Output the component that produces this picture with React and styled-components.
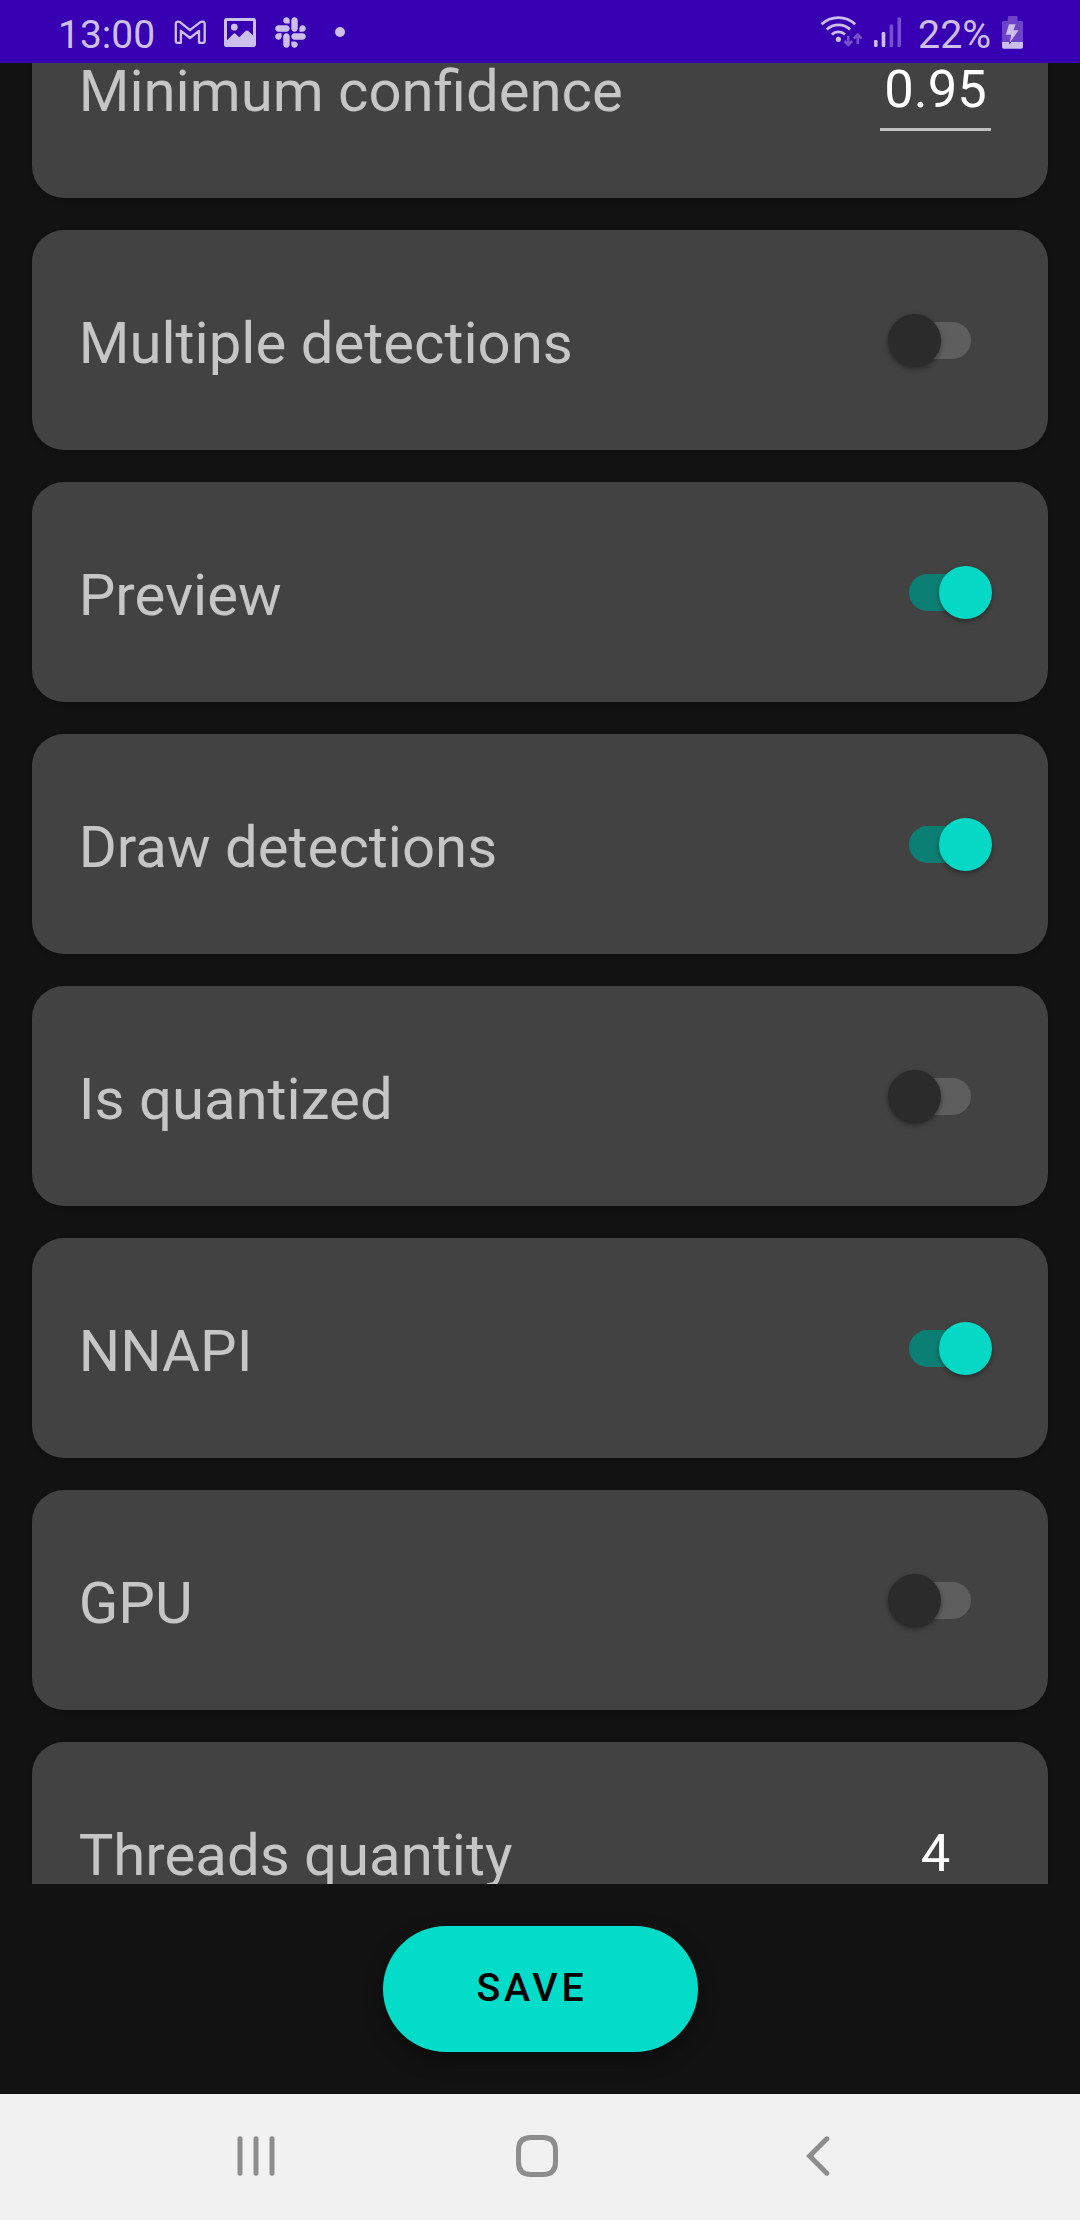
import React, { useState } from "react";
import styled, { createGlobalStyle } from "styled-components";
import { FaSlack } from "react-icons/fa";

const GlobalStyle = createGlobalStyle`
  * { box-sizing: border-box; }
  body { margin: 0; background: #121212; }
`;

const Screen = styled.div`
  width: 1080px;
  height: 2220px;
  display: flex;
  flex-direction: column;
  overflow: hidden;
  background: #121212;
  font-family: Roboto, "Liberation Sans", sans-serif;
`;

const StatusBar = styled.header`
  flex: none;
  height: 63px;
  padding: 0 57px 0 58px;
  display: flex;
  justify-content: space-between;
  background: #3700b3;
  color: #cdbfec;
`;

const StatusGroup = styled.div`
  display: flex;
  align-items: flex-start;
`;

const StatusText = styled.span`
  width: ${(p) => p.$width}px;
  margin-left: ${(p) => p.$before || 0}px;
  padding-top: 12px;
  font-size: ${(p) => p.$size}px;
  line-height: 46px;
  white-space: nowrap;
`;

const Glyph = styled.svg`
  display: block;
  flex: none;
  width: ${(p) => p.$w}px;
  height: ${(p) => p.$h}px;
  margin: ${(p) => p.$margin || "0"};
`;

const SlackMark = styled(FaSlack)`
  width: 31px;
  height: 35px;
  margin: 15px 0 0 19px;
`;

const MoreDot = styled.span`
  width: 10px;
  height: 10px;
  margin: 27px 0 0 29px;
  border-radius: 50%;
  background: currentColor;
`;

const SettingsList = styled.main`
  flex: none;
  height: 1821px;
  padding: 0 32px;
  display: flex;
  flex-direction: column;
  gap: 32px;
  overflow: hidden;
`;

const Card = styled.section`
  flex: none;
  height: 220px;
  padding: 0 56px 0 46.7px;
  display: flex;
  justify-content: space-between;
  align-items: center;
  border-radius: 32px;
  background: #424242;
  box-shadow: 0 2px 5px rgba(0, 0, 0, 0.22);
  &:first-child { margin-top: -85px; }
`;

const Label = styled.span`
  padding-top: 6px;
  font-size: 58.1px;
  line-height: 68px;
  color: #c6c6c6;
  white-space: nowrap;
`;

const ValueField = styled.span`
  width: 111px;
  height: 86px;
  margin: 0 1px 0 0;
  padding-top: 13px;
  border-bottom: 3px solid #c1c1c1;
  font-size: 52.5px;
  line-height: 62px;
  text-align: center;
  color: #fff;
`;

const Switch = styled.button`
  width: 104px;
  height: 53px;
  margin-top: 1px;
  padding: 0;
  border: 0;
  background: none;
  display: grid;
  align-items: center;
`;

const Track = styled.span`
  grid-area: 1 / 1;
  justify-self: center;
  width: 62px;
  height: 37px;
  border-radius: 19px;
  background: ${(p) => (p.$on ? "#0b7f74" : "#5e5e5e")};
`;

const Thumb = styled.span`
  grid-area: 1 / 1;
  justify-self: ${(p) => (p.$on ? "end" : "start")};
  width: 53px;
  height: 53px;
  border-radius: 50%;
  background: ${(p) => (p.$on ? "#05d8c4" : "#2b2b2b")};
  box-shadow: 0 2px 5px rgba(0, 0, 0, 0.4);
`;

const ActionArea = styled.footer`
  flex: 1;
  padding-top: 42px;
  display: flex;
  justify-content: center;
  align-items: flex-start;
`;

const SaveButton = styled.button`
  width: 315px;
  height: 126px;
  margin-left: 1px;
  padding: 0 20px 3px 0;
  border: 0;
  border-radius: 63px;
  background: #03dcc8;
  color: #000;
  font: 500 39.4px/46px Roboto, "Liberation Sans", sans-serif;
  letter-spacing: 3.7px;
  text-indent: 3px;
  box-shadow: 0 8px 20px rgba(0, 0, 0, 0.35);
`;

const NavBar = styled.nav`
  flex: none;
  height: 126px;
  padding: 0 122px 2px 115px;
  display: grid;
  grid-template-columns: repeat(3, 1fr);
  place-items: center;
  background: #f1f1f1;
  color: #8d8d8d;
`;

const GmailIcon = () => (
  <Glyph $w={32} $h={26} $margin="20px 0 0 20px" viewBox="174 20 32 26" fill="none" stroke="currentColor" strokeWidth="2.3" strokeLinejoin="round">
    <path d="M175.8 24Q175.8 21.6 178.2 21.6Q179.2 21.6 180 22.2L190 30.2L200.3 22.2Q201.2 21.6 202.2 21.6Q204.7 21.6 204.7 24V41Q204.7 42.8 203 42.8H199V30.8L190 38L180.9 30.8V42.8H177.5Q175.8 42.8 175.8 41Z" />
  </Glyph>
);

const PictureIcon = () => (
  <Glyph $w={32} $h={30} $margin="18px 0 0 18px" viewBox="224 18 32 30">
    <path fill="currentColor" fillRule="evenodd" d="M226.5 18H253.5Q256 18 256 20.5V44.5Q256 47 253.5 47H226.5Q224 47 224 44.5V20.5Q224 18 226.5 18ZM227 21V40.3L233.5 33.7Q234.5 33 235.5 33.7L239.3 37.2L245.6 31Q247 29.8 248.4 31L253 35.5V21Z" />
    <circle cx="234.3" cy="27.2" r="3.4" fill="currentColor" />
  </Glyph>
);

const WifiIcon = () => (
  <Glyph $w={42} $h={34} $margin="14px 0 0 0" viewBox="820 14 42 34" fill="none" strokeLinecap="butt">
    <g stroke="currentColor" strokeWidth="2.7">
      <path d="M821.6 24.2A24.5 24.5 0 0 1 855.2 24.2" />
      <path d="M826.8 29.5A17 17 0 0 1 850.1 29.5" />
      <path d="M831.8 34.6A9.6 9.6 0 0 1 845 34.6" />
    </g>
    <circle cx="838.4" cy="39.3" r="2.6" fill="currentColor" />
    <g stroke="#7750cb" strokeWidth="2.6">
      <path d="M848.3 36V45M844.4 41L848.3 45L852.2 41" />
      <path d="M857.8 44V34.6M853.9 38.5L857.8 34.6L861.7 38.5" />
    </g>
  </Glyph>
);

const SignalIcon = () => (
  <Glyph $w={28} $h={30} $margin="17px 0 0 12px" viewBox="874 17 28 30">
    <rect x="874" y="40" width="3.6" height="7" rx="1.3" fill="currentColor" />
    <rect x="881.7" y="32" width="3.6" height="15" rx="1.3" fill="currentColor" />
    <rect x="889.6" y="24.5" width="3.6" height="22.5" rx="1.3" fill="#7750cb" />
    <rect x="897.5" y="17.5" width="3.6" height="29.5" rx="1.3" fill="#7750cb" />
  </Glyph>
);

const BatteryIcon = () => (
  <Glyph $w={21} $h={33} $margin="16px 0 0 0" viewBox="1002 16 21 33">
    <path fill="#6f43c8" d="M1007.8 21V17.2Q1007.8 16 1009 16H1016.3Q1017.5 16 1017.5 17.2V21H1021.5Q1023 21 1023 22.5V42H1002V22.5Q1002 21 1003.5 21Z" />
    <path fill="currentColor" d="M1002 42H1023V47Q1023 48.8 1021.2 48.8H1003.8Q1002 48.8 1002 47Z" />
    <path fill="currentColor" d="M1009 24.3H1015.6L1013.5 30.3H1018.5L1009.8 42.8L1011.2 34.8H1005.8Z" />
    <path fill="#2a1070" d="M1009.2 42H1011.4L1009.5 44.6Z" />
  </Glyph>
);

const RecentsIcon = () => (
  <Glyph $w={38} $h={40} viewBox="0 0 38 40" stroke="currentColor" strokeWidth="5" strokeLinecap="round">
    <path d="M3 2.8V37.2M19 2.8V37.2M35 2.8V37.2" />
  </Glyph>
);

const HomeIcon = () => (
  <Glyph $w={42} $h={42} viewBox="0 0 42 42" fill="none" stroke="currentColor" strokeWidth="5">
    <path d="M15 2.5H27Q39.5 2.5 39.5 15V27Q39.5 39.5 27 39.5H15Q2.5 39.5 2.5 27V15Q2.5 2.5 15 2.5Z" />
  </Glyph>
);

const BackIcon = () => (
  <Glyph $w={24} $h={40} viewBox="0 0 24 40" fill="none" stroke="currentColor" strokeWidth="5" strokeLinecap="round">
    <path d="M20.8 2.8L3.6 20L20.8 37.2" />
  </Glyph>
);

const SETTINGS = [
  { label: "Minimum confidence", value: "0.95" },
  { label: "Multiple detections", on: false },
  { label: "Preview", on: true },
  { label: "Draw detections", on: true },
  { label: "Is quantized", on: false },
  { label: "NNAPI", on: true },
  { label: "GPU", on: false },
  { label: "Threads quantity", value: "4" },
];

function SettingCard({ label, value, on: initial }) {
  const [on, setOn] = useState(initial);
  return (
    <Card>
      <Label>{label}</Label>
      {value !== undefined ? (
        <ValueField>{value}</ValueField>
      ) : (
        <Switch role="switch" aria-checked={on} aria-label={label} onClick={() => setOn(!on)}>
          <Track $on={on} />
          <Thumb $on={on} />
        </Switch>
      )}
    </Card>
  );
}

export default function App() {
  return (
    <Screen>
      <GlobalStyle />
      <StatusBar>
        <StatusGroup>
          <StatusText $width={96} $size={39}>13:00</StatusText>
          <GmailIcon />
          <PictureIcon />
          <SlackMark />
          <MoreDot />
        </StatusGroup>
        <StatusGroup>
          <WifiIcon />
          <SignalIcon />
          <StatusText $width={84} $before={16} $size={39.4}>22%</StatusText>
          <BatteryIcon />
        </StatusGroup>
      </StatusBar>
      <SettingsList>
        {SETTINGS.map((s) => (
          <SettingCard key={s.label} {...s} />
        ))}
      </SettingsList>
      <ActionArea>
        <SaveButton>SAVE</SaveButton>
      </ActionArea>
      <NavBar>
        <RecentsIcon />
        <HomeIcon />
        <BackIcon />
      </NavBar>
    </Screen>
  );
}
